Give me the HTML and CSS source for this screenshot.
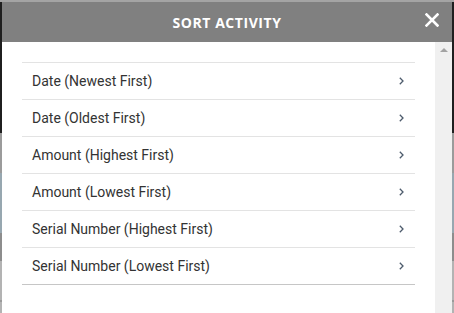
FILE: index.html
```html
<!DOCTYPE html>
<html lang="en">
<head>
  <meta charset="UTF-8" />
  <meta name="viewport" content="width=device-width, initial-scale=1.0"/>
  <title>Sort Activity</title>
  <link rel="stylesheet" href="styles.css">
</head>
<body>
  <div class="overlay">
    <div class="modal">
      <div class="modal-head">
        <h1>SORT ACTIVITY</h1>
        <button class="close-btn" aria-label="Close">
          <svg width="14" height="14" viewBox="0 0 14 14">
            <path d="M1.5 1.5 L12.5 12.5 M12.5 1.5 L1.5 12.5" stroke="#fff" stroke-width="2.6" stroke-linecap="square" fill="none"/>
          </svg>
        </button>
      </div>
      <div class="modal-body">
        <div class="scroll-area">
          <ul class="sort-list">
            <li>Date (Newest First)<span class="chev"><svg width="5" height="8" viewBox="0 0 5 8"><path d="M0.8 0.8 L4 4 L0.8 7.2" stroke="#4d5b6c" stroke-width="1.3" fill="none"/></svg></span></li>
            <li>Date (Oldest First)<span class="chev"><svg width="5" height="8" viewBox="0 0 5 8"><path d="M0.8 0.8 L4 4 L0.8 7.2" stroke="#4d5b6c" stroke-width="1.3" fill="none"/></svg></span></li>
            <li>Amount (Highest First)<span class="chev"><svg width="5" height="8" viewBox="0 0 5 8"><path d="M0.8 0.8 L4 4 L0.8 7.2" stroke="#4d5b6c" stroke-width="1.3" fill="none"/></svg></span></li>
            <li>Amount (Lowest First)<span class="chev"><svg width="5" height="8" viewBox="0 0 5 8"><path d="M0.8 0.8 L4 4 L0.8 7.2" stroke="#4d5b6c" stroke-width="1.3" fill="none"/></svg></span></li>
            <li>Serial Number (Highest First)<span class="chev"><svg width="5" height="8" viewBox="0 0 5 8"><path d="M0.8 0.8 L4 4 L0.8 7.2" stroke="#4d5b6c" stroke-width="1.3" fill="none"/></svg></span></li>
            <li>Serial Number (Lowest First)<span class="chev"><svg width="5" height="8" viewBox="0 0 5 8"><path d="M0.8 0.8 L4 4 L0.8 7.2" stroke="#4d5b6c" stroke-width="1.3" fill="none"/></svg></span></li>
          </ul>
        </div>
        <div class="scrollbar"><span class="arrow-up"></span></div>
      </div>
    </div>
  </div>
</body>
</html>
```

FILE: styles.css
```css
html, body {
  margin: 0;
  padding: 0;
  height: 100%;
  overflow: hidden;
  font-family: Roboto, 'Liberation Sans', sans-serif;
  background: linear-gradient(to bottom,
    #1f1f1f 0, #1f1f1f 133px,
    #9b9b9b 133px, #9b9b9b 173px,
    #97a7b0 173px, #97a7b0 233px,
    #8d8d8d 233px, #8d8d8d 261px,
    #b3b3b3 261px, #b3b3b3 300px,
    #9a9a9a 300px, #9a9a9a 302px,
    #b3b3b3 302px);
}
.overlay {
  padding: 2px 2px 0 2px;
  height: 100%;
  box-sizing: border-box;
  position: relative;
}
.overlay::before {
  content: '';
  position: absolute;
  left: 0;
  right: 0;
  top: 0;
  height: 2px;
  background: #a4a4a4;
}
.modal {
  height: 100%;
  display: flex;
  flex-direction: column;
  background: #fff;
}
.modal-head {
  height: 40px;
  background: #808080;
  display: flex;
  align-items: center;
  justify-content: center;
  position: relative;
}
.modal-head h1 {
  margin: 0;
  color: #fff;
  font-family: 'Open Sans', sans-serif;
  font-weight: 700;
  font-size: 14px;
  letter-spacing: 0.55px;
}
.close-btn {
  position: absolute;
  right: 13px;
  top: 11px;
  padding: 0;
  border: none;
  background: none;
  width: 14px;
  height: 14px;
  cursor: pointer;
}
.close-btn svg {
  display: block;
}
.modal-body {
  flex: 1;
  display: flex;
  min-height: 0;
}
.scroll-area {
  flex: 1;
  padding: 20px 20px 0 20px;
}
.scrollbar {
  width: 17px;
  background: #f0f0f0;
  display: flex;
  justify-content: center;
}
.arrow-up {
  margin-top: 6px;
  width: 0;
  height: 0;
  border-left: 4px solid transparent;
  border-right: 4px solid transparent;
  border-bottom: 4px solid #a3a3a3;
}
.sort-list {
  list-style: none;
  margin: 0;
  padding: 0;
  border-top: 1px solid #e3e3e3;
}
.sort-list li {
  height: 36px;
  border-bottom: 1px solid #e3e3e3;
  display: flex;
  align-items: center;
  justify-content: space-between;
  padding: 0 11px 0 10px;
  font-size: 14px;
  color: #333;
  cursor: pointer;
}
.sort-list li:last-child {
  border-bottom-color: #c6c6c6;
}
.chev svg {
  display: block;
}
```
